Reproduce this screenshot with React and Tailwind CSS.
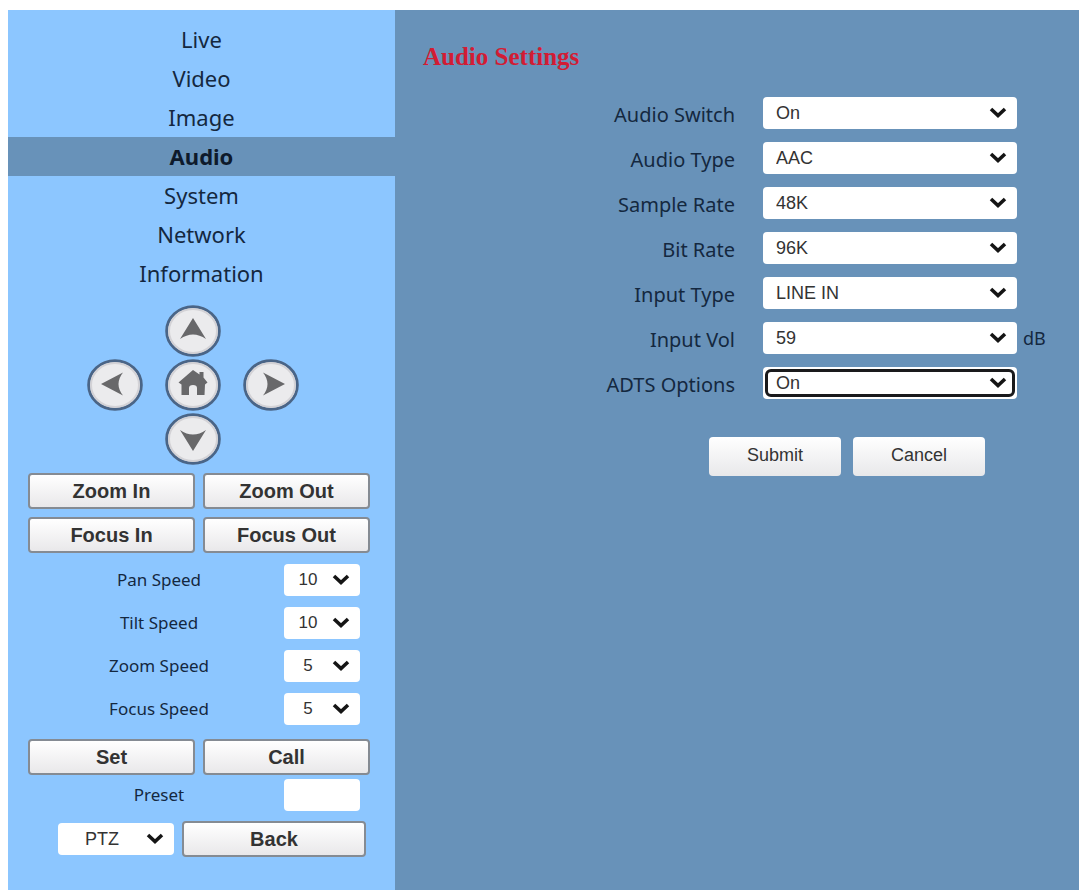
import React from "react";

const NAV = ["Live", "Video", "Image", "Audio", "System", "Network", "Information"];

const SETTINGS = [
  { id: "audio-switch", label: "Audio Switch", options: ["On", "Off"] },
  { id: "audio-type", label: "Audio Type", options: ["AAC", "MP3", "G.711A"] },
  { id: "sample-rate", label: "Sample Rate", options: ["48K", "44.1K"] },
  { id: "bit-rate", label: "Bit Rate", options: ["96K", "64K", "128K"] },
  { id: "input-type", label: "Input Type", options: ["LINE IN", "MIC"] },
  { id: "input-vol", label: "Input Vol", options: ["59", "60", "61"], unit: "dB" },
  { id: "adts-options", label: "ADTS Options", options: ["On", "Off"], focused: true },
];

const SPEEDS = [
  { id: "pan-speed", label: "Pan Speed", options: ["10", "5", "1"] },
  { id: "tilt-speed", label: "Tilt Speed", options: ["10", "5", "1"] },
  { id: "zoom-speed", label: "Zoom Speed", options: ["5", "3", "1"] },
  { id: "focus-speed", label: "Focus Speed", options: ["5", "3", "1"] },
];

const SHAPES = {
  up: "M28 13 L41 34 Q28 25 15 34 Z",
  left: "M14 25 L36 13.500 Q27 25 36 36.500 Z",
  right: "M42 25 L20 13.500 Q29 25 20 36.500 Z",
  down: "M28 38 L41 17 Q28 26 15 17 Z",
  home: "M28 11 L34.500 15.500 V13 H38.500 V18.500 L42.500 23.500 L40 25.500 L39.500 36 H32 V29 Q32 26 28 26 Q24 26 24 29 V36 H16.500 V25.500 L13.500 23.500 Z",
};

function PadButton({ shape, label, className }) {
  return (
    <button type="button" aria-label={label} className={`h-13 w-14 ${className}`}>
      <svg viewBox="0 0 56 52" className="h-full w-full">
        <ellipse cx="28" cy="26" rx="26.300" ry="24.300" fill="#ebebed" stroke="#4a6587" strokeWidth="3" />
        <ellipse cx="28" cy="26" rx="24" ry="22" fill="none" stroke="#d3d2d6" strokeWidth="2" />
        <path d={SHAPES[shape]} fill="#68686a" />
      </svg>
    </button>
  );
}

function Select({ id, label, options, className, focused }) {
  return (
    <div className="relative">
      <select
        id={id}
        aria-label={label}
        className={`block h-8 w-full appearance-none rounded-[4px] bg-white font-['Liberation_Sans',Arial,sans-serif] text-[#333] outline-none ${className}`}
      >
        {options.map((o) => (
          <option key={o}>{o}</option>
        ))}
      </select>
      {focused && (
        <span className="pointer-events-none absolute inset-0.5 rounded-[6px] border-[3px] border-[#1a1a1c]" />
      )}
      <svg viewBox="0 0 18 12" className="pointer-events-none absolute top-2.5 right-2.5 h-3 w-4.5">
        <path d="M2 2 L9 8.500 L16 2" fill="none" stroke="#151515" strokeWidth="3.600" />
      </svg>
    </div>
  );
}

function PanelButton({ children }) {
  return (
    <button
      type="button"
      className="h-9 flex-1 rounded-[4px] border-2 border-[#858b93] bg-linear-to-b from-white to-[#e9e8ea] font-['Liberation_Sans',Arial,sans-serif] text-[20px] leading-none font-bold text-[#333]"
    >
      {children}
    </button>
  );
}

function FormButton({ type, children }) {
  return (
    <button
      type={type}
      className="h-[39px] w-33 rounded-[4px] bg-linear-to-b from-white to-[#e8e8ea] pb-1 font-['Liberation_Sans',Arial,sans-serif] text-[18px] leading-none text-[#333]"
    >
      {children}
    </button>
  );
}

export default function App() {
  return (
    <div className="flex min-h-screen bg-white pt-2.5 pr-0.5 pl-2 font-['Noto_Sans',Tahoma,sans-serif] text-[#14283f]">
      <aside className="w-[387px] shrink-0 bg-[#8cc6ff] pt-2.5">
        <nav>
          {NAV.map((item) => (
            <a
              key={item}
              href={`#${item.toLowerCase()}`}
              className={`block h-[39px] text-center text-[22px] leading-[39px] ${
                item === "Audio" ? "bg-[#6892b9] font-bold text-[#0e1a2b]" : ""
              }`}
            >
              {item}
            </a>
          ))}
        </nav>

        <div className="pr-[25px] pl-5">
          <div className="mt-3 mr-3 grid grid-cols-[78px_78px_78px] grid-rows-[54px_54px_52px] justify-center justify-items-center">
            <PadButton shape="up" label="Tilt up" className="col-start-2 row-start-1" />
            <PadButton shape="left" label="Pan left" className="col-start-1 row-start-2" />
            <PadButton shape="home" label="Home" className="col-start-2 row-start-2" />
            <PadButton shape="right" label="Pan right" className="col-start-3 row-start-2" />
            <PadButton shape="down" label="Tilt down" className="col-start-2 row-start-3" />
          </div>

          <div className="mt-2 flex gap-2">
            <PanelButton>Zoom In</PanelButton>
            <PanelButton>Zoom Out</PanelButton>
          </div>
          <div className="mt-2 flex gap-2">
            <PanelButton>Focus In</PanelButton>
            <PanelButton>Focus Out</PanelButton>
          </div>

          <div className="mt-[11px] grid gap-[11px] pr-2.5">
            {SPEEDS.map((s) => (
              <div key={s.id} className="grid grid-cols-[1fr_76px] items-center">
                <label htmlFor={s.id} className="pl-1.5 text-center text-[17px] leading-8">
                  {s.label}
                </label>
                <Select id={s.id} options={s.options} className="pr-7 text-[17px] [text-align-last:center]" />
              </div>
            ))}
          </div>

          <div className="mt-[14px] flex gap-2">
            <PanelButton>Set</PanelButton>
            <PanelButton>Call</PanelButton>
          </div>
          <div className="mt-1 grid grid-cols-[1fr_76px] items-center pr-2.5">
            <label htmlFor="preset" className="pl-1.5 text-center text-[17px] leading-8">
              Preset
            </label>
            <input id="preset" type="text" className="h-8 w-full rounded-[4px] bg-white px-2 text-[17px]" />
          </div>
          <div className="mt-2.5 flex items-center gap-2 pr-1 pl-[30px]">
            <div className="w-[116px]">
              <Select
                id="mode"
                label="Control mode"
                options={["PTZ", "Lens"]}
                className="pr-7 text-[18px] [text-align-last:center]"
              />
            </div>
            <PanelButton>Back</PanelButton>
          </div>
        </div>
      </aside>

      <main className="min-w-0 flex-1 bg-[#6892b9] pt-[31px]">
        <h1 className="pl-7 font-['Liberation_Serif','Times_New_Roman',serif] text-[25px] leading-8 font-bold text-[#d21c34]">
          Audio Settings
        </h1>
        <form className="mt-6" onSubmit={(e) => e.preventDefault()}>
          <div className="grid gap-[13px]">
            {SETTINGS.map((s) => (
              <div key={s.id} className="grid grid-cols-[1fr_254px_62px] items-center">
                <label htmlFor={s.id} className="pt-1 pr-7 text-right text-[20px] leading-7">
                  {s.label}
                </label>
                <Select id={s.id} options={s.options} focused={s.focused} className="pr-8 pl-[13px] text-[18px]" />
                {s.unit && <span className="pl-1.5 text-[18px] leading-8">{s.unit}</span>}
              </div>
            ))}
          </div>
          <div className="mt-[38px] flex justify-end gap-3 pr-[94px]">
            <FormButton type="submit">Submit</FormButton>
            <FormButton type="button">Cancel</FormButton>
          </div>
        </form>
      </main>
    </div>
  );
}
